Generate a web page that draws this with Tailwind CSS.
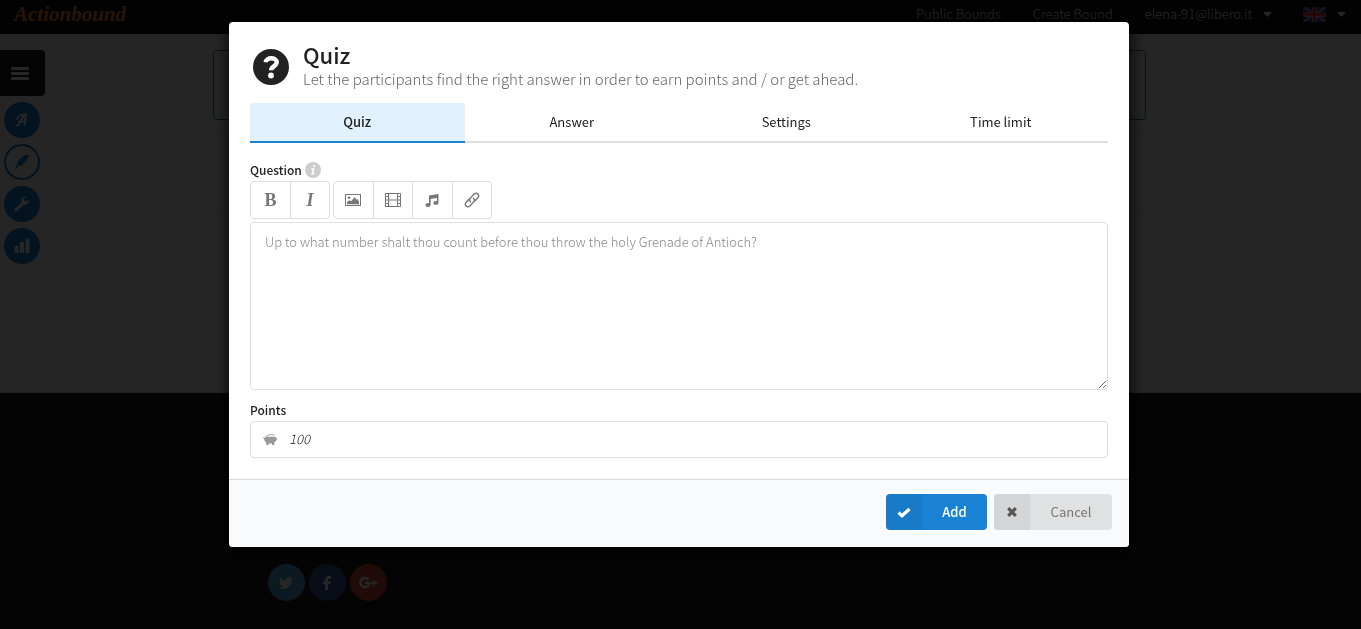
<!DOCTYPE html>
<html lang="en">
<head>
<meta charset="utf-8">
<title>Actionbound – Quiz</title>
<meta name="viewport" content="width=device-width, initial-scale=1">
<script src="https://cdn.jsdelivr.net/npm/@tailwindcss/browser@4"></script>
</head>
<body class="font-['Noto_Sans_CJK_SC','Open_Sans',sans-serif] text-[13px] leading-5 text-[#222] bg-[#1d1d1d]">

<div class="relative min-h-screen overflow-hidden flex flex-col">
  <header class="h-[34px] bg-[#101010] flex items-center justify-between pl-3.5 pr-[15px] pb-1.5 text-white">
    <a href="#" class="font-['Liberation_Serif',serif] font-bold italic text-[21px] leading-7 text-[#ff8a30]">Actionbound</a>
    <nav class="flex items-center font-light">
      <a href="#" class="px-4">Public Bounds</a>
      <a href="#" class="px-4">Create Bound</a>
      <button type="button" class="pl-4 pr-[15px] flex items-center gap-[11px]">elena-91@libero.it
        <svg class="w-[9px] h-[5px]" viewBox="0 0 9 5" fill="currentColor"><path d="M0 0h9L4.500 5z"/></svg>
      </button>
      <button type="button" aria-label="Language" class="pl-4 flex items-center gap-[11px]">
        <svg class="w-[23px] h-[15px] rounded-xs" viewBox="0 0 60 40"><path fill="#1d3fb0" d="M0 0h60v40H0z"/><path stroke="#fff" stroke-width="5" d="M0 0l60 40M60 0L0 40"/><path stroke="#e0233b" stroke-width="3" d="M0 0l60 40M60 0L0 40"/><path stroke="#fff" stroke-width="10" d="M30 0v40M0 20h60"/><path stroke="#f0142f" stroke-width="7" d="M30 0v40M0 20h60"/></svg>
        <svg class="w-[9px] h-[5px]" viewBox="0 0 9 5" fill="currentColor"><path d="M0 0h9L4.500 5z"/></svg>
      </button>
    </nav>
  </header>

  <div class="h-[359px] bg-[#f7f7f7] flex border-b border-[#ddd]">
    <aside class="w-[45px] shrink-0 pt-4 flex flex-col">
      <button type="button" aria-label="Menu" class="h-[46px] rounded-r bg-[#1b1c1d] text-white flex items-center pl-[11px]">
        <svg class="w-[18px] h-[13px]" viewBox="0 0 18 13" fill="currentColor"><rect width="18" height="3" rx="1"/><rect y="5" width="18" height="3" rx="1"/><rect y="10" width="18" height="3" rx="1"/></svg>
      </button>
      <nav class="pl-1 pt-1.5 flex flex-col gap-1.5 text-white">
        <a href="#" aria-label="Bounds" class="size-9 rounded-full bg-[#1a82d4] flex items-center justify-center">
          <svg class="size-4" viewBox="0 0 16 16" fill="none" stroke="currentColor" stroke-linecap="round"><path d="M3 13.500C6 13.500 7 4 12 2.500L10.500 12.500" stroke-width="2.200"/><path d="M3 7.500C3 4.500 6 3 11 2.300M5 9.500h7" stroke-width="1.600"/></svg>
        </a>
        <a href="#" aria-label="Edit" class="size-9 rounded-full border-2 border-[#1a82d4] text-[#1a82d4] flex items-center justify-center">
          <svg class="size-4" viewBox="0 0 16 16" fill="currentColor"><path d="M15 .8C9.500.8 5.500 4 4 8.500L1 14.500l1.300.4L4.500 11.300c2 .7 3.700.3 4.700-.9L7.400 9.700l2.900-.4 1.300-1.500-2-.3 3-.7 1-1.500-1.800-.2 2.100-.6z"/></svg>
        </a>
        <a href="#" aria-label="Tools" class="size-9 rounded-full bg-[#1a82d4] flex items-center justify-center">
          <svg class="size-4" viewBox="0 0 16 16" fill="currentColor"><path d="M14.700 3.800l-2.600 1.600-2-1.100V2.100L12.600.7C10 0 7.300 1.800 7.200 4.800L7.500 6.500 1 12.500c-.8.8-.7 1.700-.1 2.300.7.700 1.700.7 2.400 0l6.500-6.300c3 .8 5.600-1.500 4.900-4.700z"/></svg>
        </a>
        <a href="#" aria-label="Statistics" class="size-9 rounded-full bg-[#1a82d4] flex items-center justify-center">
          <svg class="size-4" viewBox="0 0 16 16" fill="currentColor"><path d="M.5 8h4v7h-4zM6 4h4v11H6zM11.500.5h4V15h-4z"/></svg>
        </a>
      </nav>
    </aside>
    <main class="grow pt-4 pr-12">
      <div class="w-full max-w-[933px] mx-auto">
        <div class="h-[70px] rounded border border-[#2b9c50] bg-[#f2fbf0]"></div>
        <div class="mt-3.5 h-[42px] rounded border border-[#e4e4e4] bg-white"></div>
        <div class="mt-8 border-t border-[#dedede]"></div>
      </div>
    </main>
  </div>

  <footer class="grow bg-[#1d1d1d] flex justify-center pb-3 pr-[3px]">
    <div class="w-full max-w-[933px] flex text-white">
      <div class="w-[465px] shrink-0 flex gap-1 items-start pl-[55px] pt-[171px]">
        <a href="#" aria-label="Twitter" class="size-[37px] rounded-full bg-[#5aa9dc] flex items-center justify-center">
          <svg class="size-[14px]" viewBox="0 0 24 24" fill="currentColor"><path d="M24 4.600a10 10 0 0 1-2.800.8 5 5 0 0 0 2.100-2.700 10 10 0 0 1-3.100 1.200 4.900 4.900 0 0 0-8.400 4.500A14 14 0 0 1 1.700 3.100a4.900 4.900 0 0 0 1.500 6.600 5 5 0 0 1-2.200-.6 4.900 4.900 0 0 0 3.900 4.900 5 5 0 0 1-2.200.1 4.900 4.900 0 0 0 4.600 3.400A10 10 0 0 1 0 19.500 14 14 0 0 0 21.500 7a10 10 0 0 0 2.500-2.400z"/></svg>
        </a>
        <a href="#" aria-label="Facebook" class="size-[37px] rounded-full bg-[#3b5998] flex items-center justify-center">
          <svg class="size-[14px]" viewBox="0 0 14 14" fill="currentColor"><path d="M11 0H9C6.500 0 5 1.500 5 4v1.500H3V8h2v6h3V8h2.300l.4-2.500H8V4.200c0-.8.300-1.400 1.400-1.400H11z"/></svg>
        </a>
        <a href="#" aria-label="Google Plus" class="size-[37px] rounded-full bg-[#dc4a38] flex items-center justify-center">
          <svg class="w-[18px] h-3" viewBox="0 0 18 12"><path d="M9.300 2.500A4.600 4.600 0 1 0 10.500 6H6" fill="none" stroke="currentColor" stroke-width="2.400"/><path fill="currentColor" d="M13.800 3.500h1.800v1.700H18V7h-2.400v2h-1.800V7H12V5.200h1.800z"/></svg>
        </a>
      </div>
      <div class="w-[213px] shrink-0 border-l border-[#2e2e2e]"></div>
      <div class="grow border-l border-[#2e2e2e]"></div>
    </div>
  </footer>
</div>

<div class="fixed inset-0 bg-black/85 flex justify-center items-start pt-[22px] pr-[3px]">
  <form role="dialog" aria-labelledby="title" class="w-[900px] max-w-full rounded bg-white overflow-hidden shadow-[1px_3px_15px_2px_rgba(0,0,0,0.8)]">
    <div class="px-[21px] pt-5 pb-[21px]">
      <div class="flex items-start gap-3.5 pl-[3px]">
        <svg class="size-9 mt-[7px]" viewBox="0 0 36 36"><circle cx="18" cy="18" r="18" fill="#222"/><path d="M12.600 13.200C13 8.200 23.700 7.800 23.700 13.300c0 4.200-5.600 4-5.600 8" fill="none" stroke="#fff" stroke-width="4.400"/><circle cx="18" cy="26.500" r="2.900" fill="#fff"/></svg>
        <div>
          <h1 id="title" class="text-[22px] leading-6 font-medium">Quiz</h1>
          <p class="pt-px text-[15px] leading-6 font-light text-[#666]">Let the participants find the right answer in order to earn points and / or get ahead.</p>
        </div>
      </div>

      <div role="tablist" class="mt-3 grid grid-cols-4 h-10">
        <button type="button" role="tab" aria-selected="true" class="bg-[#e1f1ff] border-b-2 border-[#1a82d4] font-medium">Quiz</button>
        <button type="button" role="tab" class="border-b-2 border-[#dedede]">Answer</button>
        <button type="button" role="tab" class="border-b-2 border-[#dedede]">Settings</button>
        <button type="button" role="tab" class="border-b-2 border-[#dedede]">Time limit</button>
      </div>

      <div class="mt-[17px] mb-px flex items-center gap-[3px]">
        <label for="question" class="text-xs leading-5 font-medium">Question</label>
        <svg class="size-4" viewBox="0 0 16 16"><circle cx="8" cy="8" r="8" fill="#ccc"/><path fill="#fff" d="M8.300 3h2l-.4 2h-2zM6.300 6.200h3.300l-1.100 5H9.600l-.2 1.200H5.800L6 11.200h.8l.8-3.800H6z"/></svg>
      </div>
      <div class="flex gap-[3px] text-[#777]">
        <div class="flex h-[38px] rounded border border-[#dedede] divide-x divide-[#dedede]">
          <button type="button" class="w-10 font-['Liberation_Serif',serif] font-bold text-lg">B</button>
          <button type="button" class="w-[38px] font-['Liberation_Serif',serif] font-bold italic text-lg">I</button>
        </div>
        <div class="flex h-[38px] w-[159px] rounded border border-[#dedede] divide-x divide-[#dedede]">
          <button type="button" aria-label="Image" class="flex-1 flex items-center justify-center"><svg class="w-4 h-3" viewBox="0 0 16 12"><rect x=".5" y=".5" width="15" height="11" fill="none" stroke="currentColor"/><circle cx="4" cy="3.800" r="1.300" fill="currentColor"/><path fill="currentColor" d="M2 10.200V8l2.500-1.700 1.800 1L9.500 3l1.800 2.500 1-.6L14 7.500v2.700z"/></svg></button>
          <button type="button" aria-label="Video" class="flex-1 flex items-center justify-center"><svg class="w-4 h-[14px]" viewBox="0 0 16 14" fill="none" stroke="currentColor"><path d="M.5.5h15v13H.5zM3.500.5v13M12.500.5v13M3.500 7h9M.5 3.500h3M.5 7h3M.5 10.500h3M12.500 3.500h3M12.500 7h3M12.500 10.500h3"/></svg></button>
          <button type="button" aria-label="Audio" class="flex-1 flex items-center justify-center"><svg class="w-[14px] h-[13px]" viewBox="0 0 14 13" fill="currentColor"><path d="M4 1.500L13.500 0v8.500h-1.600V4L5.600 5v6H4z"/><ellipse cx="3" cy="11" rx="2.600" ry="1.900"/><ellipse cx="10.900" cy="8.900" rx="2.600" ry="1.900"/></svg></button>
          <button type="button" aria-label="Link" class="flex-1 flex items-center justify-center"><svg class="size-4" viewBox="0 0 16 16" fill="none" stroke="currentColor" stroke-width="1.400" stroke-linecap="round"><path d="M6.500 9.800C5.300 8.500 5.500 7 6.500 6l3.700-3.900c2.500-2.300 5.900 1 3.700 3.600L11 8.800"/><path d="M9.500 6.200c1.200 1.300 1 2.800 0 3.800l-3.700 3.900c-2.500 2.300-5.900-1-3.700-3.600L5 7.200"/></svg></button>
        </div>
      </div>
      <textarea id="question" placeholder="Up to what number shalt thou count before thou throw the holy Grenade of Antioch?" class="block mt-[3px] w-full h-[168px] rounded border border-[#dedede] px-3.5 py-[9px] placeholder:font-light font-light placeholder:text-[#888]"></textarea>

      <label for="points" class="block mt-2.5 mb-px text-xs leading-5 font-medium">Points</label>
      <div class="h-[37px] rounded border border-[#dedede] flex items-center pl-3 pb-px gap-3">
        <svg class="w-[14px] h-[11px] shrink-0" viewBox="0 0 14 11" fill="#999"><path d="M2.500 2.700H11.300L12.800 3.300 13.800 4.200V6L12.500 7.200 11.500 8.300 11.200 11H9V9.500H5.500V11H3.300L3 8.500 1.500 6.500 1.200 5 0 3.800l.5-.6 1.300.6z"/><path d="M3 2.300Q7-.8 11.500 1.200" fill="none" stroke="#999" stroke-width=".9"/></svg>
        <input id="points" type="text" value="100" class="grow min-w-0 italic font-light outline-none">
      </div>
    </div>
    <div class="h-[68px] border-t border-[#dadbdc] bg-[#f9fafb] flex items-start justify-end gap-[7px] pr-[17px] pt-3.5">
      <button type="submit" class="h-9 w-[101px] rounded bg-[#1a82d4] text-white font-medium flex overflow-hidden items-stretch">
        <span class="w-9 bg-black/5 flex items-center justify-center"><svg class="w-[14px] h-[11px]" viewBox="0 0 14 11"><path d="M1.500 5.500l3.500 3.300L12.500 2" fill="none" stroke="currentColor" stroke-width="3.200"/></svg></span>
        <span class="grow self-center">Add</span>
      </button>
      <button type="button" class="h-9 w-[118px] rounded bg-[#e0e1e2] text-[#777] flex overflow-hidden items-stretch">
        <span class="w-9 bg-black/5 flex items-center justify-center text-[#555]"><svg class="size-[10px]" viewBox="0 0 10 10"><path d="M1.200 1.200l7.600 7.600M8.800 1.200L1.200 8.800" stroke="currentColor" stroke-width="3.200"/></svg></span>
        <span class="grow self-center">Cancel</span>
      </button>
    </div>
  </form>
</div>
</body>
</html>
